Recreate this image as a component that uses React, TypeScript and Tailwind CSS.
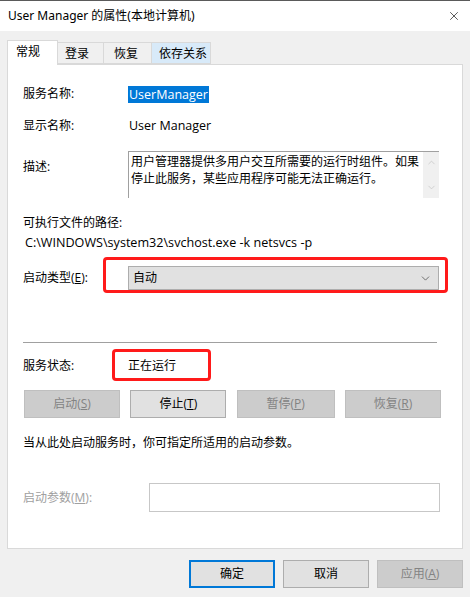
import { ChevronDown, ChevronUp, X } from "lucide-react";

const body = "font-['Open_Sans','Noto_Sans_CJK_SC',sans-serif]";

function Label({ children, gray }: { children: React.ReactNode; gray?: boolean }) {
  return (
    <div className={`w-[105px] shrink-0 ${gray ? "text-[#a0a0a0]" : "text-black"}`}>
      {children}
    </div>
  );
}

function Btn({ children, disabled, primary, w = "w-[96px]" }: { children: React.ReactNode; disabled?: boolean; primary?: boolean; w?: string }) {
  return (
    <div
      className={`${w} h-[28px] flex items-center justify-center ${
        disabled
          ? "bg-[#cccccc] border border-[#bfbfbf] text-[#838383]"
          : primary
          ? "bg-[#e1e1e1] border-2 border-[#0078d7] text-black"
          : "bg-[#e1e1e1] border border-[#adadad] text-black"
      }`}
    >
      {children}
    </div>
  );
}

export default function App() {
  return (
    <div className={`w-[470px] h-[597px] bg-[#f0f0f0] text-[12px] leading-[20px] ${body} flex flex-col overflow-hidden`}>
      {/* title bar */}
      <div className="h-[31px] bg-white border-t border-[#5a5a5a] flex items-center justify-between pl-[8px] pr-[9px]">
        <div className="text-[12px] text-black font-['Noto_Sans','Noto_Sans_CJK_SC',sans-serif]">
          User Manager 的属性(本地计算机)
        </div>
        <X size={14} strokeWidth={1.1} className="text-black" />
      </div>

      {/* tabs */}
      <div className="flex items-end pl-[7px] mt-[9px] h-[24px] relative z-10">
        <div className="w-[51px] h-[25px] bg-white border border-b-0 border-[#d9d9d9] pl-[8px] pt-[1px] -mb-[1px]">常规</div>
        <div className="w-[46px] h-[22px] border border-l-0 border-[#d9d9d9] pl-[7px] leading-[22px] bg-[#f0f0f0]">登录</div>
        <div className="w-[48px] h-[22px] border border-l-0 border-[#d9d9d9] pl-[10px] leading-[22px] bg-[#f0f0f0]">恢复</div>
        <div className="w-[59px] h-[22px] border border-l-0 border-[#d9d9d9] pl-[7px] leading-[22px] bg-[#d8eaf9]">依存关系</div>
      </div>

      {/* panel */}
      <div className="mx-[7px] h-[485px] bg-white border border-[#d9d9d9] pl-[15px] pr-[21px] flex flex-col">
        <div className="mt-[19px] flex items-center h-[20px]">
          <Label>服务名称:</Label>
          <span className="bg-[#0078d7] text-white px-[1px] leading-[17px] text-[12.5px]">UserManager</span>
        </div>
        <div className="mt-[12px] flex items-center h-[20px]">
          <Label>显示名称:</Label>
          <span className="pl-[1px] text-[12.5px]">User Manager</span>
        </div>
        <div className="mt-[15px] flex items-start">
          <div className="pt-[6px]">
            <Label>描述:</Label>
          </div>
          <div className="w-[311px] h-[47px] border-t border-l border-[#a0a0a0] flex">
            <div className="flex-1 pl-[2px] pt-[1px] leading-[17px]">
              用户管理器提供多用户交互所需要的运行时组件。如果停止此服务，某些应用程序可能无法正确运行。
            </div>
            <div className="w-[16px] bg-[#f0f0f0] flex flex-col justify-between items-center py-[5px] text-[#c2c2c2]">
              <ChevronUp size={11} strokeWidth={1.5} />
              <ChevronDown size={11} strokeWidth={1.5} />
            </div>
          </div>
        </div>
        <div className="mt-[15px] h-[20px]">可执行文件的路径:</div>
        <div className="h-[20px] pl-[2px] text-[12.6px]">C:\WINDOWS\system32\svchost.exe -k netsvcs -p</div>

        <div className="mt-[13px] flex items-center h-[24px] relative">
          <Label>
            启动类型(<span className="underline">E</span>):
          </Label>
          <div className="w-[311px] h-[24px] bg-[#e1e1e1] border border-[#adadad] flex items-center justify-between pl-[4px] pr-[6px]">
            <span>自动</span>
            <ChevronDown size={13} strokeWidth={1.2} className="text-[#333]" />
          </div>
          <div className="absolute left-[80px] top-[-9px] w-[345px] h-[36px] border-[3px] border-[#ff1a1a] rounded-[4px]" />
        </div>

        <div className="mt-[52px] h-px bg-[#a0a0a0] mr-[4px]" />

        <div className="mt-[13px] flex items-center h-[20px] relative">
          <Label>服务状态:</Label>
          <span>正在运行</span>
          <div className="absolute left-[89px] top-[-7px] w-[99px] h-[32px] border-[3px] border-[#ff1a1a] rounded-[4px]" />
        </div>

        <div className="mt-[14px] flex justify-between pl-[1px]">
          <Btn disabled>
            启动(<span className="underline">S</span>)
          </Btn>
          <Btn>
            停止(<span className="underline">T</span>)
          </Btn>
          <Btn disabled w="w-[98px]">
            暂停(<span className="underline">P</span>)
          </Btn>
          <Btn disabled>
            恢复(<span className="underline">R</span>)
          </Btn>
        </div>

        <div className="mt-[15px] h-[20px]">当从此处启动服务时，你可指定所适用的启动参数。</div>

        <div className="mt-[30px] flex items-center">
          <div className="w-[126px] shrink-0 text-[#a0a0a0]">
            启动参数(<span className="underline">M</span>):
          </div>
          <div className="w-[291px] h-[29px] border border-[#c7c7c7] bg-white" />
        </div>
      </div>

      {/* bottom buttons */}
      <div className="mt-[11px] flex justify-end gap-[8px] pr-[7px]">
        <Btn primary w="w-[86px]">确定</Btn>
        <Btn w="w-[86px]">取消</Btn>
        <Btn disabled w="w-[86px]">
          应用(<span className="underline">A</span>)
        </Btn>
      </div>
    </div>
  );
}
